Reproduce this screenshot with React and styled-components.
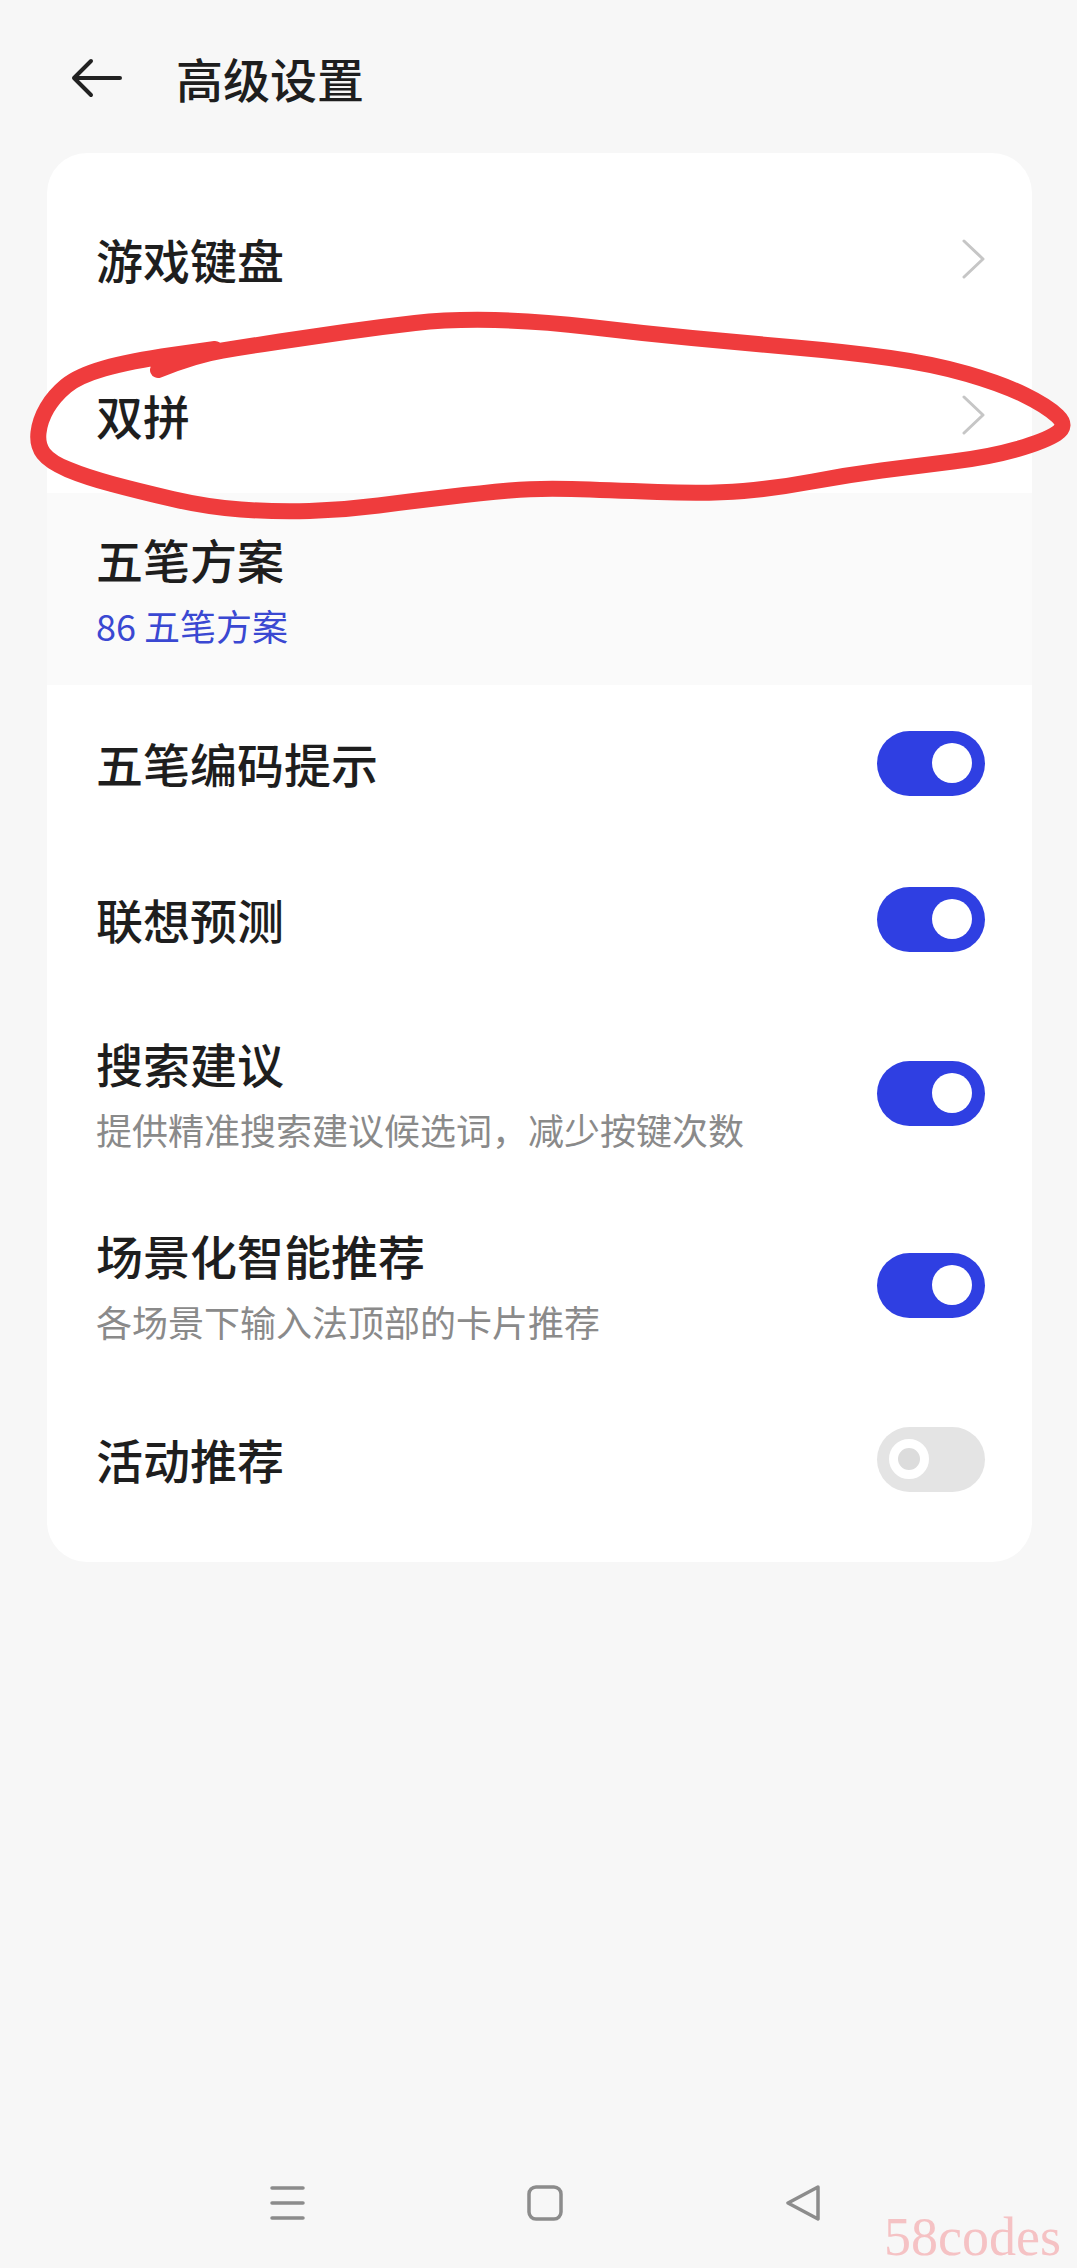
import React from 'react';
import styled, { createGlobalStyle } from 'styled-components';

const GlobalStyle = createGlobalStyle`
  html, body {
    margin: 0;
    padding: 0;
    background: #f7f7f7;
  }
  body {
    font-family: "Noto Sans CJK SC", "Noto Sans", sans-serif;
  }
`;

const Page = styled.div`
  position: relative;
  width: 1077px;
  height: 2268px;
  display: flex;
  flex-direction: column;
  background: #f7f7f7;
  overflow: hidden;
`;

const Header = styled.header`
  display: flex;
  align-items: center;
  gap: 54px;
  height: 62px;
  padding: 47px 0 44px 70px;
`;

const Title = styled.h1`
  margin: 0;
  font-size: 47px;
  line-height: 62px;
  font-weight: 500;
  color: #1e1e1e;
`;

const Card = styled.section`
  margin: 0 45px 0 47px;
  padding: 28px 0 25px;
  background: #fff;
  border-radius: 40px;
  overflow: hidden;
`;

const Row = styled.div`
  display: flex;
  align-items: center;
  justify-content: space-between;
  box-sizing: border-box;
  min-height: 156px;
  padding: 35px 47px 35px 49px;
  background: ${({ $pressed }) => ($pressed ? '#fafafa' : 'transparent')};
`;

const Texts = styled.div`
  display: flex;
  flex-direction: column;
`;

const Label = styled.div`
  font-size: 47px;
  line-height: 62px;
  font-weight: 500;
  color: #1e1e1e;
`;

const Sub = styled.div`
  margin-top: 10px;
  font-size: 36px;
  line-height: 50px;
  color: ${({ $accent }) => ($accent ? '#3a48d2' : '#8a8a8a')};
`;

const Track = styled.div`
  flex: none;
  display: flex;
  align-items: center;
  justify-content: ${({ $on }) => ($on ? 'flex-end' : 'flex-start')};
  box-sizing: border-box;
  width: 108px;
  height: 65px;
  padding: 0 ${({ $on }) => ($on ? '13px' : '12px')};
  border-radius: 33px;
  background: ${({ $on }) => ($on ? '#2f3fe2' : '#e4e4e4')};
`;

const Knob = styled.div`
  box-sizing: border-box;
  width: 40px;
  height: 40px;
  border-radius: 50%;
  background: ${({ $on }) => ($on ? '#fff' : '#dcdcdc')};
  border: ${({ $on }) => ($on ? 'none' : '9px solid #fff')};
`;

const Spacer = styled.div`
  flex: 1;
`;

const Nav = styled.nav`
  display: flex;
  align-items: center;
  justify-content: center;
  gap: 222px;
  height: 130px;
  padding-left: 14px;
`;

const Watermark = styled.div`
  position: absolute;
  right: 16px;
  bottom: 4px;
  font-family: "Liberation Serif", serif;
  font-size: 54px;
  line-height: 1;
  color: #f5c2c4;
`;

const Scribble = styled.svg`
  position: absolute;
  top: 0;
  left: 0;
  pointer-events: none;
`;

const BackArrow = () => (
  <svg width="52" height="40" viewBox="0 0 52 40" fill="none">
    <path d="M50 20H4M21 3L4 20l17 17" stroke="#222" strokeWidth="4" strokeLinecap="round" strokeLinejoin="round" />
  </svg>
);

const Chevron = () => (
  <svg width="23" height="40" viewBox="0 0 23 40" fill="none">
    <path d="M2 2l19 18L2 38" stroke="#c6c6c6" strokeWidth="3" strokeLinecap="round" strokeLinejoin="round" />
  </svg>
);

const Toggle = ({ on }) => (
  <Track $on={on}>
    <Knob $on={on} />
  </Track>
);

// hand drawn red loop round the 双拼 row
const loop = [
  [158, 370], [195, 355], [250, 346], [310, 337], [380, 327], [450, 319], [540, 321],
  [640, 333], [744, 343], [847, 352], [933, 364], [1002, 384], [1047, 406], [1068, 426],
  [1045, 441], [990, 457], [916, 466], [847, 475], [778, 488], [709, 494], [606, 490],
  [537, 488], [482, 493], [413, 501], [344, 510], [275, 512], [207, 507], [138, 491],
  [86, 477], [50, 462], [37, 445], [40, 420], [54, 396], [78, 376], [130, 361], [215, 349],
];

const smooth = pts => {
  let d = `M${pts[0][0]} ${pts[0][1]}`;
  for (let i = 1; i < pts.length - 1; i++) {
    const [x, y] = pts[i];
    const [nx, ny] = pts[i + 1];
    d += ` Q${x} ${y} ${(x + nx) / 2} ${(y + ny) / 2}`;
  }
  const last = pts[pts.length - 1];
  return `${d} L${last[0]} ${last[1]}`;
};

const MenuIcon = () => (
  <svg width="35" height="34" viewBox="0 0 35 34" fill="none">
    <path d="M2 2h31M2 17h31M2 32h31" stroke="#8c8c8c" strokeWidth="3.5" strokeLinecap="round" />
  </svg>
);

const HomeIcon = () => (
  <svg width="36" height="36" viewBox="0 0 36 36" fill="none">
    <rect x="2" y="2" width="32" height="32" rx="7" stroke="#8c8c8c" strokeWidth="3.5" />
  </svg>
);

const BackIcon = () => (
  <svg width="36" height="36" viewBox="0 0 36 36" fill="none">
    <path d="M33 2L3 18l30 16z" stroke="#8c8c8c" strokeWidth="3.5" strokeLinejoin="round" />
  </svg>
);

const items = [
  { label: '游戏键盘', arrow: true },
  { label: '双拼', arrow: true },
  { label: '五笔方案', sub: '86 五笔方案', accent: true, pressed: true },
  { label: '五笔编码提示', toggle: true, on: true },
  { label: '联想预测', toggle: true, on: true },
  { label: '搜索建议', sub: '提供精准搜索建议候选词，减少按键次数', toggle: true, on: true },
  { label: '场景化智能推荐', sub: '各场景下输入法顶部的卡片推荐', toggle: true, on: true },
  { label: '活动推荐', toggle: true, on: false },
];

export default function App() {
  return (
    <Page>
      <GlobalStyle />
      <Header>
        <BackArrow />
        <Title>高级设置</Title>
      </Header>

      <Card>
        {items.map(item => (
          <Row key={item.label} $pressed={item.pressed}>
            <Texts>
              <Label>{item.label}</Label>
              {item.sub && <Sub $accent={item.accent}>{item.sub}</Sub>}
            </Texts>
            {item.arrow && <Chevron />}
            {item.toggle && <Toggle on={item.on} />}
          </Row>
        ))}
      </Card>

      <Spacer />
      <Nav>
        <MenuIcon />
        <HomeIcon />
        <BackIcon />
      </Nav>

      <Scribble width="1077" height="560" viewBox="0 0 1077 560">
        <path d={smooth(loop)} fill="none" stroke="#ef3c3d" strokeWidth="16" strokeLinecap="round" strokeLinejoin="round" />
      </Scribble>
      <Watermark>58codes</Watermark>
    </Page>
  );
}
